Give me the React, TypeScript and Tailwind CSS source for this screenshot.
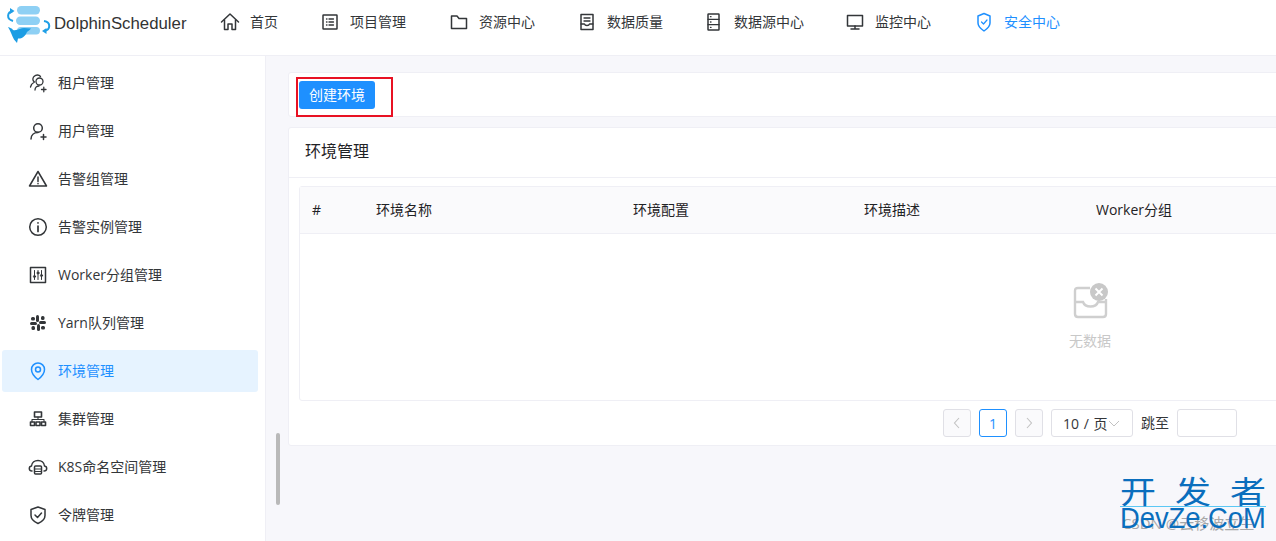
import { ReactNode } from "react";

const font = "font-['Open_Sans','Noto_Sans_CJK_SC',sans-serif]";

const Icon = ({ children, className = "" }: { children: ReactNode; className?: string }) => (
  <svg
    viewBox="0 0 20 20"
    fill="none"
    stroke="currentColor"
    strokeWidth="1.5"
    strokeLinecap="round"
    strokeLinejoin="round"
    className={"w-5 h-5 shrink-0 " + className}
  >
    {children}
  </svg>
);

const Logo = () => (
  <svg viewBox="0 0 54 44" className="w-[54px] h-[44px] shrink-0">
    <rect x="17" y="5" width="23" height="8.5" rx="4.2" fill="#8ed0f4" />
    <rect x="16" y="15.5" width="24" height="8.5" rx="4.2" fill="#8ed0f4" />
    <rect x="17" y="26" width="23" height="7.5" rx="3.7" fill="#8ed0f4" />
    <path d="M13 10 C7 11 6 18 13 20" stroke="#1f9fe6" strokeWidth="2" fill="none" />
    <path d="M10 7 L14.5 10 L10 13 Z" fill="#1f9fe6" />
    <path d="M44 20 C51 21 51 29 44 30" stroke="#1f9fe6" strokeWidth="2" fill="none" />
    <path d="M46.5 27 L42 30 L46.5 33 Z" fill="#1f9fe6" />
    <path d="M8 26 C10 27 12 27 13 29 C17 30 21 27 24 27 L31 27.5 C30 29 28 30 27 31 C25 36 21 38 18 37.5 L17 42 L14 38.5 C12 35 11 31 8 26 Z" fill="#1c9de4" />
  </svg>
);

const navItems: { label: string; x: string; icon: ReactNode; active?: boolean }[] = [
  {
    label: "首页",
    x: "w-[100px]",
    icon: (
      <Icon>
        <path d="M1.5 10 L10 2 L18.5 10" />
        <path d="M4.5 8 V17.5 H8 V12 H12 V17.5 H15.5 V8" />
      </Icon>
    ),
  },
  {
    label: "项目管理",
    x: "w-[129px]",
    icon: (
      <Icon>
        <rect x="3" y="3" width="14" height="14" rx="0.5" />
        <path d="M6.5 7 H7 M6.5 10 H7 M6.5 13 H7 M9 7 H13.5 M9 10 H13.5 M9 13 H13.5" strokeWidth="1.3" />
      </Icon>
    ),
  },
  {
    label: "资源中心",
    x: "w-[128px]",
    icon: (
      <Icon>
        <path d="M2.5 4 H8 L10 6.5 H17.5 V16.5 H2.5 Z" />
      </Icon>
    ),
  },
  {
    label: "数据质量",
    x: "w-[127px]",
    icon: (
      <Icon>
        <path d="M4 2.5 H16 V17.5 H4 Z" />
        <path d="M7 6 H13 M7 9 H13 M4 12 H7.5 C8 14 12 14 12.5 12 H16" strokeWidth="1.3" />
      </Icon>
    ),
  },
  {
    label: "数据源中心",
    x: "w-[141px]",
    icon: (
      <Icon>
        <rect x="4" y="2" width="11" height="16" rx="0.5" />
        <path d="M4 7.3 H15 M4 12.7 H15 M6.5 4.7 H7 M6.5 10 H7 M6.5 15.4 H7" strokeWidth="1.3" />
      </Icon>
    ),
  },
  {
    label: "监控中心",
    x: "w-[129px]",
    icon: (
      <Icon>
        <rect x="2.5" y="3.5" width="15" height="10.5" />
        <path d="M10 14 V17 M6 17 H14" />
      </Icon>
    ),
  },
  {
    label: "安全中心",
    x: "w-[110px]",
    active: true,
    icon: (
      <Icon>
        <path d="M10 1.5 L16 4 V11 C16 14 13 17 10 19 C7 17 4 14 4 11 V4 Z" />
        <path d="M7.5 10 L9.5 12 L13 8" strokeWidth="1.2" />
      </Icon>
    ),
  },
];

const menuItems: { label: string; icon: ReactNode; active?: boolean }[] = [
  {
    label: "租户管理",
    icon: (
      <Icon>
        <circle cx="11.5" cy="8.5" r="3.5" strokeWidth="1.3" />
        <path d="M6 3.5 C8 1.5 11 1.5 12.5 3.5 M5.5 4 C4.5 6 5 8 6.5 9 C4.5 10 3 12 2.5 14 M7 17 C7 14.5 9 13 11 13 M13.5 16.5 H18 M15.8 14.2 V18.8" strokeWidth="1.3" />
      </Icon>
    ),
  },
  {
    label: "用户管理",
    icon: (
      <Icon>
        <circle cx="10" cy="7" r="4.3" />
        <path d="M3 18 C3 14 6 11.5 10 11.5 M13 16 H18 M15.5 13.5 V18.5" />
      </Icon>
    ),
  },
  {
    label: "告警组管理",
    icon: (
      <Icon>
        <path d="M10 2.5 L18.5 17 H1.5 Z" />
        <path d="M10 8 V12.5 M10 14.6 V14.8" />
      </Icon>
    ),
  },
  {
    label: "告警实例管理",
    icon: (
      <Icon>
        <circle cx="10" cy="10" r="8.3" />
        <path d="M10 9 V14.5 M10 5.8 V6" strokeWidth="1.7" />
      </Icon>
    ),
  },
  {
    label: "Worker分组管理",
    icon: (
      <Icon>
        <rect x="2.5" y="2.5" width="15" height="15" />
        <path d="M6.5 5.5 V14.5 M10 5.5 V14.5 M13.5 5.5 V14.5" strokeWidth="1" />
        <circle cx="6.5" cy="11.5" r="1.1" fill="currentColor" strokeWidth="0.8" />
        <circle cx="10" cy="8" r="1.1" fill="currentColor" strokeWidth="0.8" />
        <circle cx="13.5" cy="10.5" r="1.1" fill="currentColor" strokeWidth="0.8" />
      </Icon>
    ),
  },
  {
    label: "Yarn队列管理",
    icon: (
      <Icon>
        <g stroke="none" fill="currentColor">
          <rect x="8" y="2" width="3" height="7" rx="1.5" />
          <rect x="9" y="11" width="3" height="7" rx="1.5" />
          <rect x="2" y="9" width="7" height="3" rx="1.5" />
          <rect x="11" y="8" width="7" height="3" rx="1.5" />
          <rect x="3" y="4" width="4" height="3.5" rx="1.5" />
          <rect x="13" y="3" width="3.5" height="4" rx="1.5" />
          <rect x="3.5" y="13" width="3.5" height="4" rx="1.5" />
          <rect x="13" y="13" width="4" height="3.5" rx="1.5" />
        </g>
      </Icon>
    ),
  },
  {
    label: "环境管理",
    active: true,
    icon: (
      <Icon>
        <path d="M10 18.5 C6 15.5 3.5 12.5 3.5 8.5 A6.5 6.5 0 0 1 16.5 8.5 C16.5 12.5 14 15.5 10 18.5 Z" />
        <circle cx="10" cy="8.5" r="2.5" />
      </Icon>
    ),
  },
  {
    label: "集群管理",
    icon: (
      <Icon>
        <rect x="6.5" y="3" width="7" height="5" strokeWidth="1.6" strokeLinecap="butt" />
        <path d="M4 13 V10.5 H16 V13 M10 8 V10.5" strokeWidth="1.1" />
        <rect x="2.5" y="13" width="4" height="3.5" strokeWidth="1.6" />
        <rect x="13.5" y="13" width="4" height="3.5" strokeWidth="1.6" />
        <rect x="8" y="13" width="4" height="3.5" strokeWidth="1.6" />
      </Icon>
    ),
  },
  {
    label: "K8S命名空间管理",
    icon: (
      <Icon>
        <path d="M4 14 C0.5 14 0.5 9.5 3.5 9 C4 1.5 16 1.5 16.5 9 C19.5 9.5 19.5 14 16 14" />
        <rect x="6.5" y="9" width="7" height="8" rx="1" />
        <path d="M6.5 12 H13.5 M6.5 14.5 H13.5" strokeWidth="1.2" />
      </Icon>
    ),
  },
  {
    label: "令牌管理",
    icon: (
      <Icon>
        <path d="M10 2 L17 4.5 V10.5 C17 14.5 13.5 17 10 18.5 C6.5 17 3 14.5 3 10.5 V4.5 Z" />
        <path d="M7 10 L9.5 12.5 L13.5 8" />
      </Icon>
    ),
  },
];

const columns = [
  { label: "#", w: "w-[64px]" },
  { label: "环境名称", w: "w-[257px]" },
  { label: "环境配置", w: "w-[231px]" },
  { label: "环境描述", w: "w-[232px]" },
  { label: "Worker分组", w: "w-[180px]" },
];

const EmptyIcon = () => (
  <svg viewBox="0 0 36 38" className="w-9 h-[38px] block">
    <path d="M17 7 H5 Q2 7 2 10 V33 Q2 36 5 36 H30 Q33 36 33 33 V18" fill="none" stroke="#cfcfcf" strokeWidth="2.4" />
    <path d="M2 21 H10 C12 27 23 27 25 21 H33" fill="none" stroke="#cfcfcf" strokeWidth="2.4" />
    <circle cx="26" cy="11" r="9" fill="#c8c8c8" />
    <path d="M22.5 7.5 L29.5 14.5 M29.5 7.5 L22.5 14.5" stroke="#fff" strokeWidth="1.9" />
  </svg>
);

export default function App() {
  return (
    <div className={"relative w-[1276px] h-[541px] overflow-hidden bg-[#f7f7fb] text-[#333639] " + font}>
      <header className="h-[56px] bg-white border-b border-[#efeff5] flex items-start">
        <div className="flex items-center w-[220px] h-[46px]">
          <Logo />
          <span className="text-[16.8px] text-[#333] font-['Liberation_Sans',sans-serif] pt-[2px]">
            DolphinScheduler
          </span>
        </div>
        <nav className="flex items-center h-[44px]">
          {navItems.map((item) => (
            <div
              key={item.label}
              className={"flex items-center gap-[10px] text-[14px] " + item.x + (item.active ? " text-[#1e90ff]" : " text-[#333639]")}
            >
              {item.icon}
              <span className="pb-[2px]">{item.label}</span>
            </div>
          ))}
        </nav>
      </header>

      <div className="flex h-[485px]">
        <aside className="w-[266px] shrink-0 bg-white border-r border-[#efeff5] pl-[2px] pt-[6px]">
          <ul className="flex flex-col gap-[6px] w-[256px]">
            {menuItems.map((item) => (
              <li
                key={item.label}
                className={
                  "h-[42px] rounded-[3px] flex items-center gap-[10px] pl-[26px] text-[14px] " +
                  (item.active ? "bg-[#e6f3ff] text-[#1e90ff]" : "text-[#333639]")
                }
              >
                {item.icon}
                <span className="pb-[2px]">{item.label}</span>
              </li>
            ))}
          </ul>
        </aside>

        <main className="flex-1 min-w-0 pl-[22px] pt-[16px]">
          <div className="h-[45px] w-[1000px] bg-white border border-[#efeff5] rounded-[3px] flex items-center pl-[10px]">
            <button className="h-[28px] w-[76px] rounded-[3px] bg-[#1e90ff] text-white text-[14px]">创建环境</button>
          </div>

          <div className="mt-[10px] w-[1000px] h-[319px] bg-white border border-[#efeff5] rounded-[3px]">
            <div className="h-[50px] border-b border-[#efeff5] flex items-center pl-[16px] pb-[4px] text-[16px] text-[#1f2225]">
              环境管理
            </div>
            <div className="ml-[10px] mt-[8px] h-[215px] border border-[#efeff5] rounded-[3px]">
              <div className="h-[47px] bg-[#fafafc] border-b border-[#efeff5] flex items-center pl-[12px] pb-[2px] text-[14px] text-[#1f2225]">
                {columns.map((c) => (
                  <div key={c.label} className={c.w}>
                    {c.label}
                  </div>
                ))}
              </div>
              <div className="pl-[769px] pt-[47px] flex flex-col items-start">
                <div className="ml-[4px]">
                  <EmptyIcon />
                </div>
                <div className="mt-[11px] text-[14px] text-[#c8c8c8]">无数据</div>
              </div>
            </div>
            <div className="flex items-center pl-[654px] mt-[8px] text-[14px]">
              <div className="w-[28px] h-[28px] rounded-[3px] border border-[#e0e0e6] bg-[#fafafc] flex items-center justify-center text-[#c2c2c2]">
                <svg viewBox="0 0 16 16" className="w-4 h-4" fill="none" stroke="currentColor" strokeWidth="1.1">
                  <path d="M10 3 L5.5 8 L10 13" />
                </svg>
              </div>
              <div className="ml-[8px] w-[28px] h-[28px] rounded-[3px] border border-[#1e90ff] text-[#1e90ff] flex items-center justify-center">
                1
              </div>
              <div className="ml-[8px] w-[28px] h-[28px] rounded-[3px] border border-[#e0e0e6] bg-[#fafafc] flex items-center justify-center text-[#c2c2c2]">
                <svg viewBox="0 0 16 16" className="w-4 h-4" fill="none" stroke="currentColor" strokeWidth="1.1">
                  <path d="M6 3 L10.5 8 L6 13" />
                </svg>
              </div>
              <div className="ml-[8px] w-[82px] h-[28px] rounded-[3px] border border-[#e0e0e6] flex items-center pl-[11px] text-[#333639]">
                <span className="whitespace-nowrap [word-spacing:1px]">10 / 页</span>
                <svg viewBox="0 0 12 12" className="w-3 h-3 ml-[1px] text-[#c2c2c2]" fill="none" stroke="currentColor" strokeWidth="1">
                  <path d="M1 4 L6 9 L11 4" />
                </svg>
              </div>
              <span className="ml-[8px] text-[#333639] pb-[2px]">跳至</span>
              <div className="ml-[8px] w-[60px] h-[28px] rounded-[3px] border border-[#e0e0e6]" />
            </div>
          </div>
        </main>
      </div>

      {/* page scrollbar sits over the gutter */}
      <div className="absolute left-[276px] top-[433px] w-[4px] h-[72px] rounded-full bg-[#b9b9b9]" />

      {/* red annotation box from the screenshot */}
      <div className="absolute left-[296px] top-[77px] w-[97px] h-[40px] border-2 border-[#e81123]" />

      {/* csdn mark under the site watermark */}
      <div className="absolute left-[1122px] top-[513px] text-[15px] leading-[20px] text-[#a8a8a8] whitespace-nowrap">
        CSDN @云移波立生
      </div>

      {/* site watermark */}
      <div className="absolute left-[1120px] top-[473px] w-[146px] text-[#0a6ebd]">
        <div className="flex justify-between text-[36px] leading-[33px] scale-y-[0.85] font-['Noto_Sans_CJK_SC',sans-serif]">
          <span>开</span>
          <span>发</span>
          <span>者</span>
        </div>
        <div className="h-px bg-[#5cc8f5]" />
        <div className="text-[30px] leading-[20px] pt-[1px] font-['Liberation_Sans',sans-serif] whitespace-nowrap origin-left scale-x-[0.91]">
          DevZe.CoM
        </div>
      </div>
    </div>
  );
}
